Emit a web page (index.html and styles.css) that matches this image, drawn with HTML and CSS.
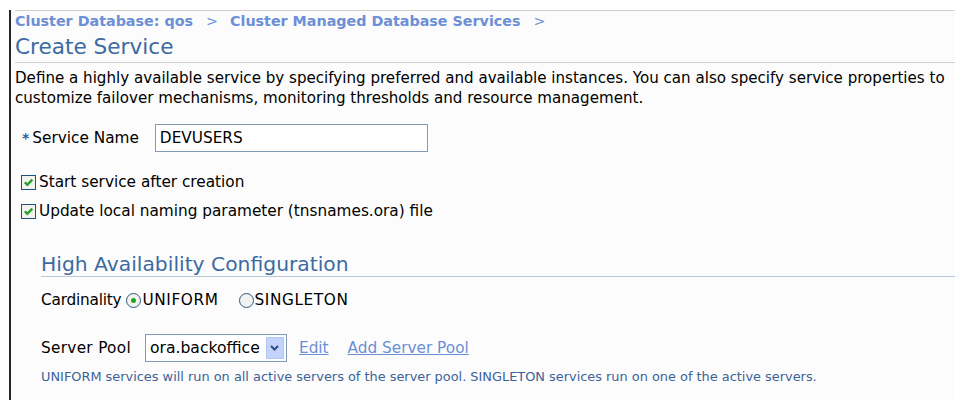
FILE: index.html
```html
<!DOCTYPE html>
<html>
<head>
<meta charset="utf-8">
<title>Create Service</title>
<link rel="stylesheet" href="styles.css">
</head>
<body>
<div class="page">
  <div class="header">
    <div class="crumbs">
      <a href="#">Cluster Database: qos</a><span class="sep">&gt;</span><a href="#">Cluster Managed Database Services</a><span class="sep">&gt;</span>
    </div>
    <h1 class="title">Create Service</h1>
  </div>

  <p class="intro">Define a highly available service by specifying preferred and available instances. You can also specify service properties to customize failover mechanisms, monitoring thresholds and resource management.</p>

  <div class="field-row">
    <span class="req">*</span><label class="field-label" for="svc">Service Name</label>
    <input id="svc" class="text-input" type="text" value="DEVUSERS">
  </div>

  <div class="check-row">
    <span class="checkbox"><svg viewBox="0 0 13 13" width="13" height="13"><path d="M2.8 6.3 L5.3 8.8 L10.3 3.6" fill="none" stroke="#22a322" stroke-width="2.3"/></svg></span>
    <span>Start service after creation</span>
  </div>
  <div class="check-row">
    <span class="checkbox"><svg viewBox="0 0 13 13" width="13" height="13"><path d="M2.8 6.3 L5.3 8.8 L10.3 3.6" fill="none" stroke="#22a322" stroke-width="2.3"/></svg></span>
    <span>Update local naming parameter (tnsnames.ora) file</span>
  </div>

  <section class="section">
    <h2 class="section-title">High Availability Configuration</h2>

    <div class="radio-row">
      <span class="radio-label">Cardinality</span>
      <span class="radio on"></span><span class="opt">UNIFORM</span>
      <span class="radio"></span><span class="opt">SINGLETON</span>
    </div>

    <div class="pool-row">
      <span class="pool-label">Server Pool</span>
      <span class="select">
        <span class="select-value">ora.backoffice</span>
        <span class="select-btn"><svg viewBox="0 0 9 6" width="9" height="6"><path d="M1 1 L4.5 4.5 L8 1" fill="none" stroke="#2d4f86" stroke-width="2"/></svg></span>
      </span>
      <a class="link edit" href="#">Edit</a>
      <a class="link add" href="#">Add Server Pool</a>
    </div>
    <p class="tip">UNIFORM services will run on all active servers of the server pool. SINGLETON services run on one of the active servers.</p>
  </section>
</div>
</body>
</html>
```
FILE: styles.css
```css
html, body {
  margin: 0;
  padding: 0;
  background: #ffffff;
}

body {
  font-family: "DejaVu Sans", Tahoma, sans-serif;
  font-size: 15.3px;
  color: #000;
}

.page {
  margin: 10px 0 0 9px;
  border-left: 2px solid #262626;
  background: #fbfcfb;
  min-height: 390px;
  padding: 0 0 0 4px;
}

.header {
  border-top: 1px solid #cfcfcf;
  border-bottom: 1px solid #cfcfcf;
  padding: 0 0 2px 0;
}

.crumbs {
  font-size: 14.3px;
  font-weight: bold;
  color: #6c8fd6;
  line-height: 20px;
}

.crumbs a {
  color: #6c8fd6;
  text-decoration: none;
}

.crumbs .sep {
  font-weight: normal;
  margin: 0 12px 0 13px;
}

.title {
  margin: 3px 0 0 0;
  font-size: 21.6px;
  font-weight: normal;
  color: #3c6aa2;
  line-height: 26px;
}

.intro {
  margin: 5px 0 0 0;
  line-height: 20px;
  font-size: 15.1px;
  width: 940px;
}

.field-row {
  display: flex;
  align-items: center;
  margin: 16px 0 0 7px;
}

.req {
  color: #2f5c9c;
  font-size: 14px;
  font-weight: bold;
  margin: 0 3px 0 0;
}

.field-label {
  margin-right: 16px;
}

.text-input {
  width: 273px;
  height: 28px;
  box-sizing: border-box;
  border: 1px solid #7f9db9;
  background: #fff;
  font-family: "DejaVu Sans", Tahoma, sans-serif;
  font-size: 15.3px;
  color: #000;
  padding: 0 4px;
  margin: 0;
}

.check-row {
  display: flex;
  align-items: center;
  margin: 20px 0 0 6px;
  height: 20px;
}

.check-row + .check-row {
  margin-top: 9px;
}

.checkbox {
  width: 13px;
  height: 13px;
  border: 1px solid #1c5180;
  background: #f2f2ee;
  margin-right: 3px;
  display: inline-flex;
}

.section {
  margin: 32px 0 0 26px;
}

.section-title {
  margin: 0;
  font-size: 20.3px;
  font-weight: normal;
  color: #3c6aa2;
  line-height: 23px;
  border-bottom: 1px solid #b9c8d8;
}

.radio-row {
  display: flex;
  align-items: center;
  margin-top: 13px;
  height: 20px;
}

.radio-label {
  margin-right: 5px;
  letter-spacing: -0.2px;
}

.radio {
  width: 13px;
  height: 13px;
  border: 1px solid #2b5a86;
  border-radius: 50%;
  background: #f2f2ee;
  display: inline-flex;
  align-items: center;
  justify-content: center;
  margin-right: 1px;
}

.radio.on::after {
  content: "";
  width: 5px;
  height: 5px;
  border-radius: 50%;
  background: #22a322;
}

.opt {
  margin-right: 20px;
  letter-spacing: 0.6px;
}

.pool-row {
  display: flex;
  align-items: center;
  margin-top: 24px;
}

.pool-label {
  margin-right: 14px;
  letter-spacing: 0.3px;
}

.select {
  display: inline-flex;
  align-items: center;
  justify-content: space-between;
  width: 142px;
  height: 28px;
  box-sizing: border-box;
  border: 1px solid #7f9db9;
  background: #fff;
  padding: 0 2px 0 4px;
  font-size: 15.6px;
}

.select-btn {
  width: 18px;
  height: 22px;
  box-sizing: border-box;
  background: #c3d3fb;
  border: 1px solid #b3c6ef;
  display: inline-flex;
  align-items: center;
  justify-content: center;
}

.link {
  color: #6c8fd6;
}

.edit {
  margin-left: 12px;
}

.add {
  margin-left: 19px;
}

.tip {
  margin: 7px 0 0 0;
  font-size: 12.9px;
  color: #3d6299;
  line-height: 16px;
}
```
